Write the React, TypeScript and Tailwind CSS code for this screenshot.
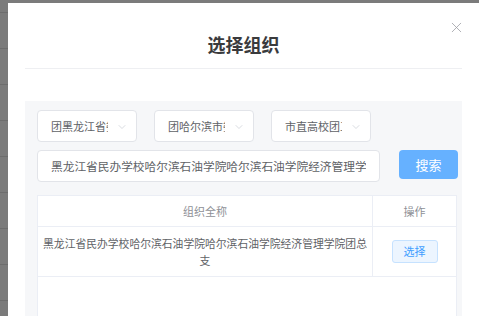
import { ChevronDown, X } from 'lucide-react'

const cjk = { fontFamily: '"Noto Sans CJK SC", "Noto Sans", sans-serif' }

const selects = ['团黑龙江省委', '团哈尔滨市委', '市直高校团工委']

export default function App() {
  return (
    <div className="w-[479px] h-[316px] overflow-hidden bg-[#7b7b7b] flex" style={cjk}>
      {/* page behind the overlay */}
      <div className="w-[8px] shrink-0 pt-[12px] flex flex-col">
        {Array.from({ length: 9 }).map((_, i) => (
          <div key={i} className="h-[36px] shrink-0 border-t border-[#6d6d6d]" />
        ))}
      </div>

      <div className="flex-1 mt-[3px] bg-white flex flex-col px-[17px] relative">
        {/* Header */}
        <div className="pt-[29px] pb-[12px] border-b border-[#eeeff2] text-center">
          <h2 className="text-[18px] leading-[24px] font-bold text-[#3a3b3d]">选择组织</h2>
        </div>
        <button className="absolute top-[16px] right-[14px] text-[#9a9ca2]">
          <X size={17} strokeWidth={1.1} />
        </button>

        {/* Body */}
        <div className="mt-[32px] flex-1 bg-[#f6f7f9] pl-[12px] pr-[4px] pt-[9px]">
          <div className="flex gap-[17px]">
            {selects.map(s => (
              <div
                key={s}
                className="relative w-[100px] h-[32px] bg-white border border-[#e2e4e9] rounded-[4px] pl-[13px] pr-[28px] flex items-center"
              >
                <span className="block overflow-hidden whitespace-nowrap text-[11px] text-[#606266]">{s}</span>
                <ChevronDown size={12} strokeWidth={1.2} className="absolute right-[8px] top-[10px] text-[#c0c4cc]" />
              </div>
            ))}
          </div>

          <div className="flex items-start mt-[8px]">
            <div className="w-[343px] h-[32px] bg-white border border-[#e2e4e9] rounded-[4px] pl-[13px] pr-[13px] flex items-center">
              <span className="block overflow-hidden whitespace-nowrap text-[11.7px] text-[#606266]">黑龙江省民办学校哈尔滨石油学院哈尔滨石油学院经济管理学院团总支</span>
            </div>
            <button className="ml-[19px] w-[59px] h-[29px] rounded-[4px] bg-[#66b1ff] text-white text-[13px]">搜索</button>
          </div>

          {/* Table */}
          <div className="mt-[13px] w-[420px] h-[200px] bg-white border-x border-t border-[#ebeef5]">
            <div className="flex h-[31px] border-b border-[#ebeef5] text-[11px] text-[#8e9096]">
              <div className="w-[335px] flex items-center justify-center border-r border-[#ebeef5]">组织全称</div>
              <div className="flex-1 flex items-center justify-center">操作</div>
            </div>
            <div className="flex h-[50px] border-b border-[#ebeef5]">
              <div className="w-[335px] px-[4px] flex items-center justify-center text-center border-r border-[#ebeef5] text-[10.8px] leading-[17px] text-[#606266]">
                黑龙江省民办学校哈尔滨石油学院哈尔滨石油学院经济管理学院团总支
              </div>
              <div className="flex-1 flex items-center justify-center">
                <button className="w-[46px] h-[23px] rounded-[3px] bg-[#ecf5ff] border border-[#c6e2ff] text-[#409eff] text-[11px]">
                  选择
                </button>
              </div>
            </div>
          </div>
        </div>
      </div>
    </div>
  )
}
